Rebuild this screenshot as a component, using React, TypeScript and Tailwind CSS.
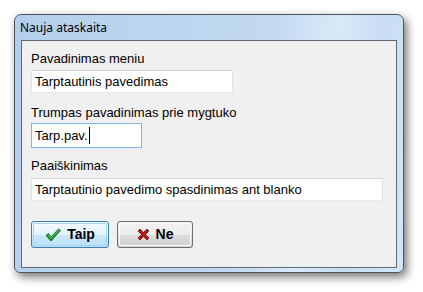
import React from "react";

const font = { fontFamily: '"Liberation Sans", Arial, sans-serif' };

function Field({ value, w, focused, caret }: { value: string; w: string; focused?: boolean; caret?: boolean }) {
  return (
    <div
      className={`${w} h-[23px] bg-white border flex items-center pl-[3px] text-[13px] text-black ${
        focused ? "border-[#7eb4ea]" : "border-t-[#d5d5d5] border-l-[#e2e2e2] border-r-[#e2e2e2] border-b-[#e9e9e9]"
      }`}
    >
      <span>{value}</span>
      {caret && <span className="inline-block w-px h-[16px] bg-black ml-[1px]" />}
    </div>
  );
}

export default function App() {
  return (
    <div className="w-[423px] h-[292px] bg-white pt-[14px] pl-[14px]" style={font}>
      <div className="w-[390px] h-[259px] rounded-t-[7px] rounded-b-[6px] border border-[#4a5561] bg-[linear-gradient(100deg,#b4cfec_0%,#c3d9f1_60%,#dae9f8_75%,#c9ddf3_85%,#d4e5f7_100%)] shadow-[3px_4px_10px_rgba(0,0,0,0.55)] flex flex-col">
        <div className="h-[25px] flex items-center pl-[5px] text-[12px] text-black" style={{ fontFamily: '"Noto Sans", "DejaVu Sans", sans-serif' }}>
          Nauja ataskaita
        </div>
        <div className="flex-1 px-[6px] pb-[4px] pl-[6px]">
          <div className="h-full border border-[#5c6a78] bg-[#f0f0f0] pl-[9px] pt-[10px] text-[13px] text-black">
            <div className="h-[16px] leading-[16px]">Pavadinimas meniu</div>
            <div className="mt-[3px]">
              <Field value="Tarptautinis pavedimas" w="w-[202px]" />
            </div>
            <div className="h-[16px] leading-[16px] mt-[12px]">Trumpas pavadinimas prie mygtuko</div>
            <div className="mt-[2px]">
              <div className="w-[111px] h-[25px] bg-white border border-[#7eb4ea] flex items-center pl-[3px] text-[13px]">
                <span>Tarp.pav.</span>
                <span className="inline-block w-px h-[17px] bg-black ml-[1px]" />
              </div>
            </div>
            <div className="h-[16px] leading-[16px] mt-[10px]">Paaiškinimas</div>
            <div className="mt-[4px]">
              <Field value="Tarptautinio pavedimo spasdinimas ant blanko" w="w-[352px]" />
            </div>
            <div className="flex gap-[8px] mt-[20px]">
              <div className="w-[78px] h-[27px] rounded-[3px] border border-[#3c7fb1] bg-[linear-gradient(180deg,#f2fafe_0%,#e4f3fc_50%,#cbe8f9_51%,#b9e0f7_100%)] p-px">
                <div className="w-full h-full rounded-[2px] border border-[#a7d6f5] flex items-center justify-center gap-[6px] font-bold text-[14px]">
                  <svg width="16" height="14" viewBox="0 0 16 14">
                    <path d="M1 7.5 L3.5 5.5 L6 9 L13.5 1 L15.5 2.5 L6 13 Z" fill="#1f9b2a" stroke="#0c5a14" strokeWidth="0.8" strokeLinejoin="round" />
                    <path d="M3.5 6.5 L6 10 L14 2" fill="none" stroke="#6fd36a" strokeWidth="0.8" />
                  </svg>
                  <span>Taip</span>
                </div>
              </div>
              <div className="w-[76px] h-[27px] rounded-[3px] border border-[#707070] bg-[linear-gradient(180deg,#f2f2f2_0%,#ebebeb_50%,#dddddd_51%,#cfcfcf_100%)] p-px">
                <div className="w-full h-full rounded-[2px] border border-[#fcfcfc] flex items-center justify-center gap-[6px] font-bold text-[14px]">
                  <svg width="13" height="13" viewBox="0 0 13 13">
                    <path d="M1 3 L3 1 L6.5 4.5 L10 1 L12 3 L8.5 6.5 L12 10 L10 12 L6.5 8.5 L3 12 L1 10 L4.5 6.5 Z" fill="#b31b1b" stroke="#5e0a0a" strokeWidth="0.7" strokeLinejoin="round" />
                  </svg>
                  <span>Ne</span>
                </div>
              </div>
            </div>
          </div>
        </div>
      </div>
    </div>
  );
}
